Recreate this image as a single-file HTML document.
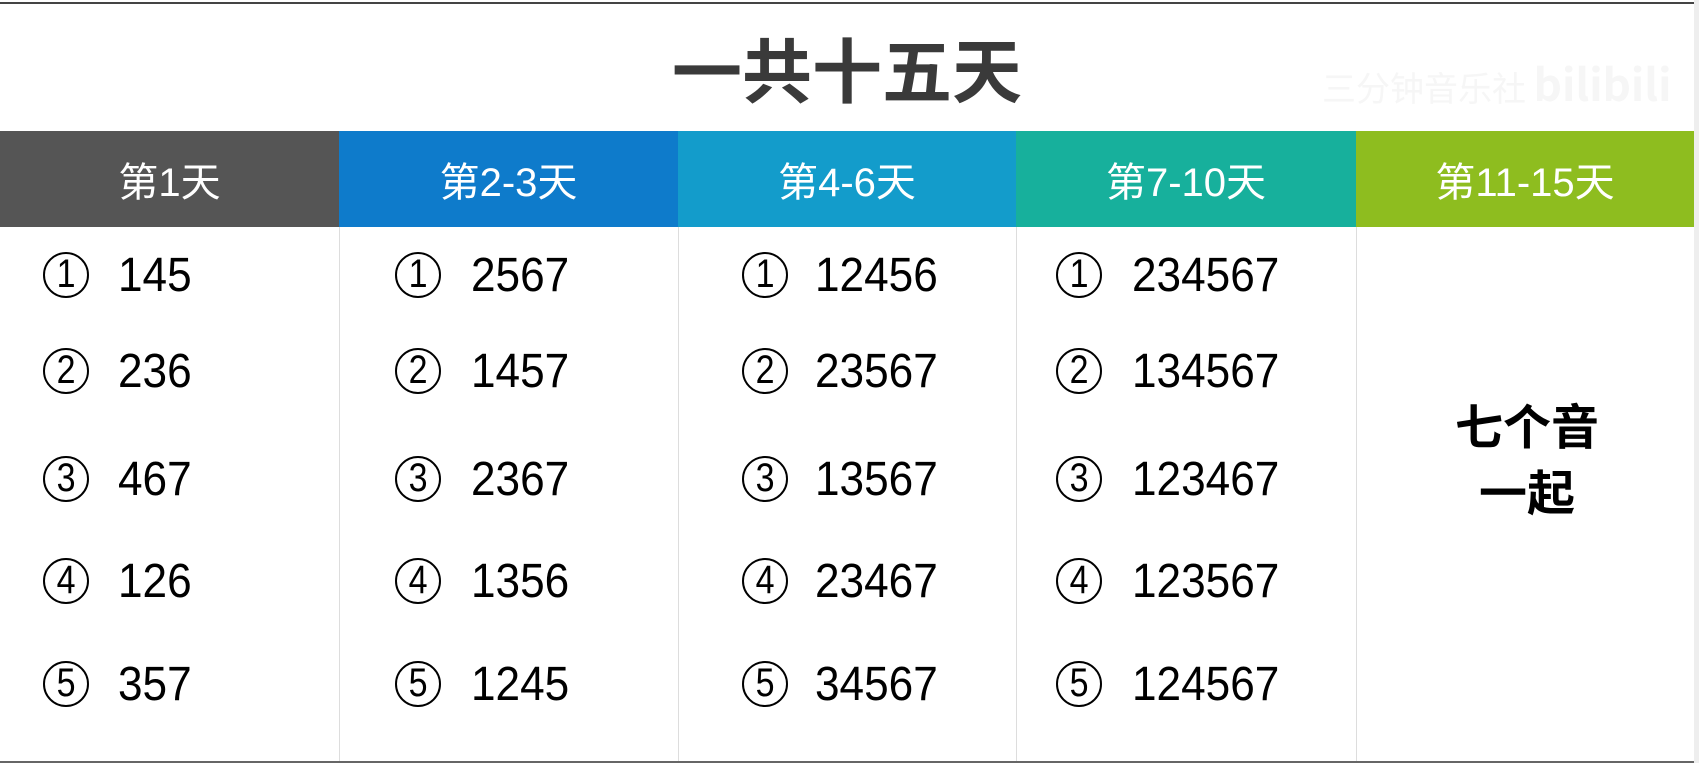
<!DOCTYPE html>
<html><head><meta charset="utf-8"><style>
*{margin:0;padding:0;box-sizing:border-box}
body{width:1699px;height:763px;overflow:hidden;background:#fff;position:relative;font-family:"Liberation Sans","Noto Sans CJK SC",sans-serif}
.a{position:absolute;white-space:nowrap}
.h{position:absolute;top:131px;height:96px;color:#fff;font-size:40px;display:flex;align-items:center;justify-content:center}
.v{position:absolute;top:227px;width:1px;height:536px;background:#ddd}
.c{position:absolute;width:46px;height:46px;border:2.5px solid #000;border-radius:50%;font-size:40px;line-height:41px;text-align:center;color:#000}
.c span{display:inline-block;transform:scaleX(0.85)}
.n{position:absolute;font-size:48px;line-height:48px;color:#000;transform:scaleX(0.92);transform-origin:left}
</style></head><body>
<div class="a" style="left:0;top:2px;width:1694px;height:2px;background:#444"></div>
<div class="a" style="left:1694px;top:0;width:5px;height:763px;background:#eee"></div>
<div class="a" style="left:672px;top:28px;font-size:70px;line-height:80px;font-weight:bold;color:#3a3a3a;font-family:'Noto Sans CJK SC',sans-serif">一共十五天</div>
<div class="a" style="left:1322px;top:50px;font-size:34px;color:#f6f6f6;font-family:'Noto Sans CJK SC',sans-serif">三分钟音乐社 <b style="font-size:44px">bilibili</b></div>
<div class="h" style="left:0;width:339px;background:#555">第1天</div>
<div class="h" style="left:339px;width:339px;background:#0e7bcb">第2-3天</div>
<div class="h" style="left:678px;width:338px;background:#139ccb">第4-6天</div>
<div class="h" style="left:1016px;width:340px;background:#17b09c">第7-10天</div>
<div class="h" style="left:1356px;width:338px;background:#8ebd1f">第11-15天</div>
<div class="v" style="left:339px"></div><div class="v" style="left:678px"></div><div class="v" style="left:1016px"></div><div class="v" style="left:1356px"></div>
<div class="a" style="left:0;top:761px;width:1694px;height:2px;background:#666"></div>
<div id="g"></div>
<div class="a" style="left:1455px;top:390px;font-size:48px;line-height:66px;font-weight:bold;text-align:center;font-family:'Noto Sans CJK SC',sans-serif">七个音<br>一起</div>
<script>
var cols=[[43,118,["145","236","467","126","357"]],[395,471,["2567","1457","2367","1356","1245"]],[742,815,["12456","23567","13567","23467","34567"]],[1056,1132,["234567","134567","123467","123567","124567"]]];
var ys=[275,371,479,581,684],h="";
cols.forEach(function(c){for(var i=0;i<5;i++){h+='<div class="c" style="left:'+c[0]+'px;top:'+(ys[i]-23)+'px"><span>'+(i+1)+'</span></div><div class="n" style="left:'+c[1]+'px;top:'+(ys[i]-23)+'px">'+c[2][i]+'</div>';}});
document.getElementById("g").innerHTML=h;
</script>
</body></html>
